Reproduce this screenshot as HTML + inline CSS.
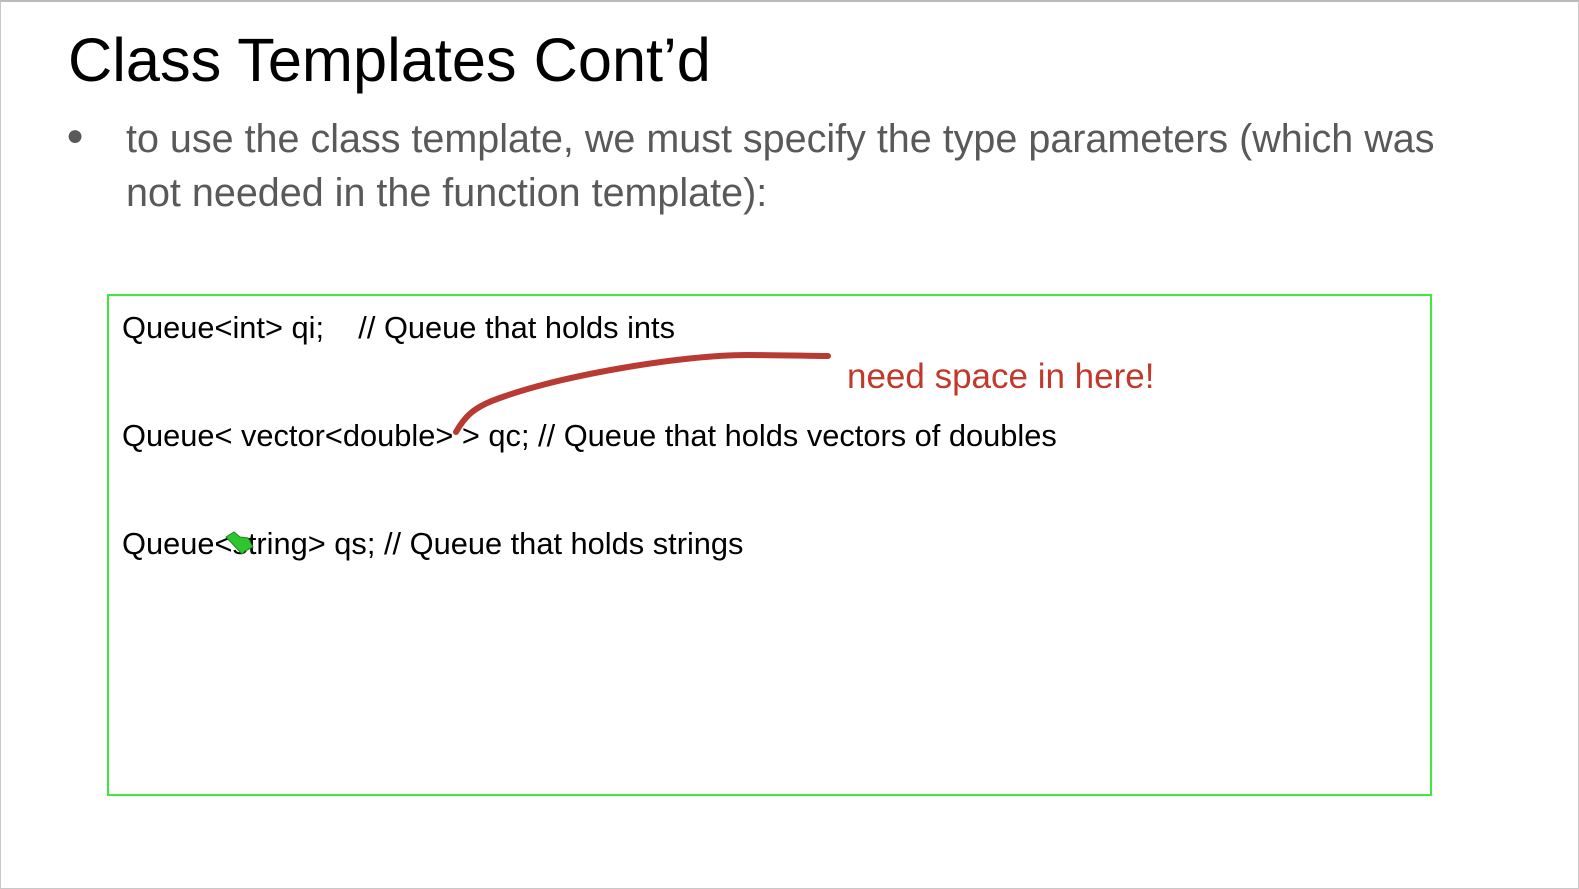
<!DOCTYPE html>
<html><head><style>
html,body{margin:0;padding:0;}
body{width:1579px;height:888px;position:relative;overflow:hidden;background:#fff;font-family:"Liberation Sans",Arial,sans-serif;}
.frame{position:absolute;left:0;top:0;width:1577px;height:886px;border:1px solid #c8c8c8;border-top:2px solid #bbb;}
.t{position:absolute;white-space:nowrap;}
</style></head><body>
<div class="frame"></div>
<div class="t" style="left:68px;top:25px;font-size:61.3px;color:#000;">Class Templates Cont’d</div>
<div class="t" style="left:66px;top:119px;font-size:30px;color:#595959;">●</div>
<div class="t" style="left:126px;top:112px;font-size:39.5px;line-height:54px;color:#595959;">to use the class template, we must specify the type parameters (which was<br>not needed in the function template):</div>
<div style="position:absolute;left:107px;top:294px;width:1325px;height:502px;border:2px solid #3ee83e;box-sizing:border-box;"></div>
<div class="t" style="left:122px;top:310px;font-size:30.8px;color:#000;">Queue&lt;int&gt; qi;&nbsp;&nbsp;&nbsp; // Queue that holds ints</div>
<div class="t" style="left:122px;top:418px;font-size:30.8px;color:#000;">Queue&lt; vector&lt;double&gt; &gt; qc; // Queue that holds vectors of doubles</div>
<div class="t" style="left:122px;top:526px;font-size:30.8px;color:#000;">Queue&lt;string&gt; qs; // Queue that holds strings</div>
<div class="t" style="left:847px;top:357px;font-size:35px;color:#c0392b;">need space in here!</div>
<svg style="position:absolute;left:0;top:0" width="1579" height="888">
<path d="M456 432 C464 418 472 408 497 399 C562 375 682 355 747 355 C782 355 812 356 828 356" fill="none" stroke="#b83a32" stroke-width="6" stroke-linecap="round"/>
<path d="M226 537 L234 532 L240 537 L248 538 L253 547 L245 551 L242 554 Z" fill="#2fc52f" stroke="#1a8a1a" stroke-width="1"/>
</svg>
</body></html>
